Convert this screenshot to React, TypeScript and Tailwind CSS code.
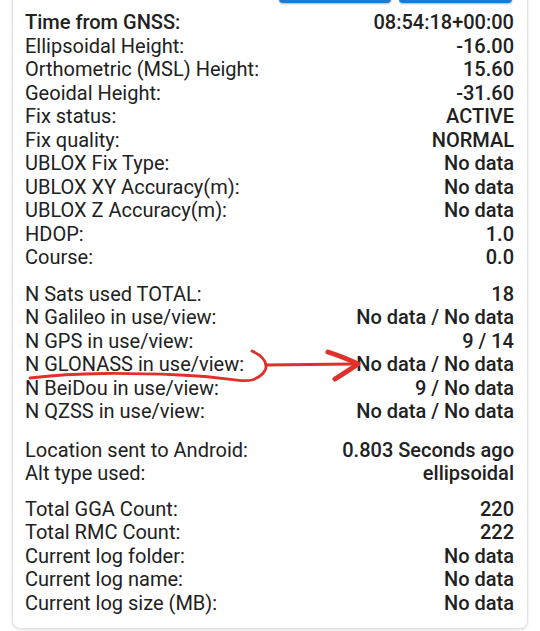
const sections: { label: string; value: string; strong?: boolean }[][] = [
  [
    { label: "Time from GNSS:", value: "08:54:18+00:00", strong: true },
    { label: "Ellipsoidal Height:", value: "-16.00" },
    { label: "Orthometric (MSL) Height:", value: "15.60" },
    { label: "Geoidal Height:", value: "-31.60" },
    { label: "Fix status:", value: "ACTIVE" },
    { label: "Fix quality:", value: "NORMAL" },
    { label: "UBLOX Fix Type:", value: "No data" },
    { label: "UBLOX XY Accuracy(m):", value: "No data" },
    { label: "UBLOX Z Accuracy(m):", value: "No data" },
    { label: "HDOP:", value: "1.0" },
    { label: "Course:", value: "0.0" },
  ],
  [
    { label: "N Sats used TOTAL:", value: "18" },
    { label: "N Galileo in use/view:", value: "No data / No data" },
    { label: "N GPS in use/view:", value: "9 / 14" },
    { label: "N GLONASS in use/view:", value: "No data / No data" },
    { label: "N BeiDou in use/view:", value: "9 / No data" },
    { label: "N QZSS in use/view:", value: "No data / No data" },
  ],
  [
    { label: "Location sent to Android:", value: "0.803 Seconds ago" },
    { label: "Alt type used:", value: "ellipsoidal" },
  ],
  [
    { label: "Total GGA Count:", value: "220" },
    { label: "Total RMC Count:", value: "222" },
    { label: "Current log folder:", value: "No data" },
    { label: "Current log name:", value: "No data" },
    { label: "Current log size (MB):", value: "No data" },
  ],
];

const gaps = ["mt-0", "mt-[13px]", "mt-[15px]", "mt-[12px]"];

const Row = ({ label, value, strong }: { label: string; value: string; strong?: boolean }) => (
  <div className="flex justify-between leading-[23.5px]">
    <span className={strong ? "font-medium" : ""}>{label}</span>
    <span className="font-medium">{value}</span>
  </div>
);

// red hand-drawn annotation over the GLONASS row
const Scribble = () => (
  <svg
    className="pointer-events-none absolute left-0 top-0"
    width={540}
    height={631}
    viewBox="0 0 540 631"
    fill="none"
    stroke="#e0302b"
    strokeLinecap="round"
    strokeLinejoin="round"
  >
    <path
      d="M30 378 C 80 372, 130 373, 180 375 S 240 383, 252 380 C 262 377, 267 370, 266 365 C 265 359, 261 355, 252 351"
      strokeWidth={2.8}
    />
    <path d="M266 365 L 352 364" strokeWidth={3.2} />
    <path d="M328 352 C 340 356, 350 360, 358 364 C 351 369, 343 374, 335 379" strokeWidth={5} />
  </svg>
);

export default function App() {
  return (
    <div
      className="relative h-[631px] w-[540px] overflow-hidden bg-white text-[20px] text-[#212121]"
      style={{ fontFamily: "Roboto, 'Liberation Sans', sans-serif" }}
    >
      <div className="mx-[12px] mt-[-40px] rounded-lg border border-[#e3e3e3] bg-white pb-[13px] pl-[12px] pr-[13px] pt-[6px] shadow-[0_1px_3px_rgba(0,0,0,0.12)]">
        <div className="flex justify-end gap-2 pr-[2px]">
          <div className="h-9 w-[112px] rounded bg-[#1e7bd0] shadow-[0_1px_2px_rgba(0,0,0,0.3)]" />
          <div className="h-9 w-[113px] rounded bg-[#1e7bd0] shadow-[0_1px_2px_rgba(0,0,0,0.3)]" />
        </div>
        <div className="mt-[8px]">
          {sections.map((rows, i) => (
            <div key={i} className={gaps[i]}>
              {rows.map((r) => (
                <Row key={r.label} {...r} />
              ))}
            </div>
          ))}
        </div>
      </div>
      <Scribble />
    </div>
  );
}
